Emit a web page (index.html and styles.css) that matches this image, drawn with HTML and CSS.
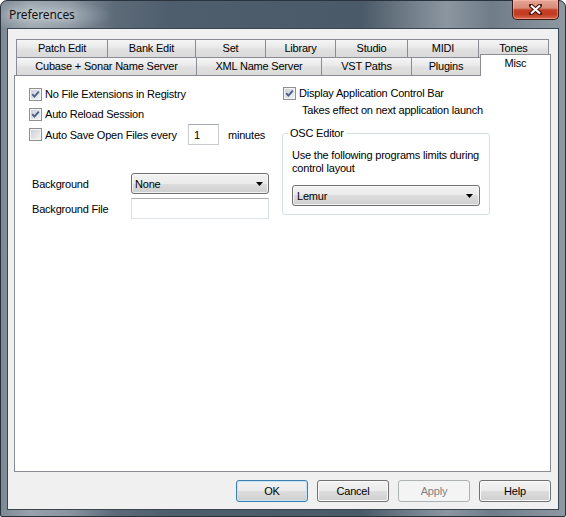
FILE: index.html
```html
<!DOCTYPE html>
<html lang="en">
<head>
    <meta charset="UTF-8">
    <title>Preferences</title>
    <link rel="stylesheet" href="styles.css">
</head>
<body>

<div class="window">
    <div class="titlebar">
        <span class="title">Preferences</span>
        <span class="close-btn">
            <svg width="13" height="11" viewBox="0 0 13 11">
                <path d="M2 1.5 L11 9.5 M11 1.5 L2 9.5" stroke="#4a1810" stroke-width="4.2" stroke-linecap="square"/>
                <path d="M2 1.5 L11 9.5 M11 1.5 L2 9.5" stroke="#fff" stroke-width="2"/>
            </svg>
        </span>
    </div>

    <div class="client">
        <div class="tabs">
            <div class="tab-row">
                <div class="tab w-patch">Patch Edit</div>
                <div class="tab w-bank">Bank Edit</div>
                <div class="tab w-set">Set</div>
                <div class="tab w-library">Library</div>
                <div class="tab w-studio">Studio</div>
                <div class="tab w-midi">MIDI</div>
                <div class="tab w-tones">Tones</div>
            </div>
            <div class="tab-row">
                <div class="tab w-cubase">Cubase + Sonar Name Server</div>
                <div class="tab w-xml">XML Name Server</div>
                <div class="tab w-vst">VST Paths</div>
                <div class="tab w-plugins">Plugins</div>
                <div class="tab tab-active w-misc">Misc</div>
            </div>
        </div>

        <div class="tab-page">
            <div class="col-left">
                <div class="check-row">
                    <span class="checkbox checked">
                        <svg width="11" height="11" viewBox="0 0 11 11"><path d="M2.2 5.2 L4.4 7.6 L8.8 2.6" fill="none" stroke="#4b5f8e" stroke-width="1.9"/></svg>
                    </span>
                    No File Extensions in Registry
                </div>
                <div class="check-row">
                    <span class="checkbox checked">
                        <svg width="11" height="11" viewBox="0 0 11 11"><path d="M2.2 5.2 L4.4 7.6 L8.8 2.6" fill="none" stroke="#4b5f8e" stroke-width="1.9"/></svg>
                    </span>
                    Auto Reload Session
                </div>
                <div class="check-row save-row">
                    <span class="checkbox"></span>
                    <span class="save-label">Auto Save Open Files every</span>
                    <span class="textbox minutes-box">1</span>
                    <span class="unit">minutes</span>
                </div>

                <div class="field-row bg-row">
                    <span class="field-label">Background</span>
                    <div class="combo bg-combo">
                        <span>None</span>
                        <svg width="7" height="4" viewBox="0 0 7 4"><path d="M0 0 H7 L3.5 4 Z" fill="#000"/></svg>
                    </div>
                </div>
                <div class="field-row file-row">
                    <span class="field-label">Background File</span>
                    <span class="textbox file-box"></span>
                </div>
            </div>

            <div class="col-right">
                <div class="check-row bar-row">
                    <span class="checkbox checked">
                        <svg width="11" height="11" viewBox="0 0 11 11"><path d="M2.2 5.2 L4.4 7.6 L8.8 2.6" fill="none" stroke="#4b5f8e" stroke-width="1.9"/></svg>
                    </span>
                    Display Application Control Bar
                </div>
                <div class="note">Takes effect on next application launch</div>

                <fieldset class="group">
                    <legend>OSC Editor</legend>
                    <p class="group-text">Use the following programs limits during<br>control layout</p>
                    <div class="combo osc-combo">
                        <span>Lemur</span>
                        <svg width="7" height="4" viewBox="0 0 7 4"><path d="M0 0 H7 L3.5 4 Z" fill="#000"/></svg>
                    </div>
                </fieldset>
            </div>
        </div>

        <div class="buttons">
            <button class="btn btn-default">OK</button>
            <button class="btn">Cancel</button>
            <button class="btn" disabled>Apply</button>
            <button class="btn">Help</button>
        </div>
    </div>
</div>

</body>
</html>
```

FILE: styles.css
```css
body {
    margin: 0;
    background: #fff;
    font-family: "Liberation Sans", Arial, sans-serif;
    font-size: 11px;
    letter-spacing: -0.2px;
    color: #000;
}

/* window frame */
.window {
    width: 566px;
    height: 517px;
    box-sizing: border-box;
    border: 1px solid #29333d;
    border-radius: 7px 7px 2px 2px;
    padding: 0 6px 6px;
    display: flex;
    flex-direction: column;
    background-color: #5a6876;
    background-image: linear-gradient(to right, #7c8893 0%, #98a2ab 5%, #8a959f 12%, #5d6b79 20%, #4f5e6c 30%, #4b5a68 64%, #6f7c88 72%, #8b96a0 79%, #707d89 87%, #7d8994 93%, #8e98a2 100%);
}

.titlebar {
    height: 27px;
    margin: 0 -6px;
    padding: 0 6px 0 8px;
    display: flex;
    justify-content: space-between;
    align-items: flex-start;
    background: radial-gradient(ellipse 70px 16px at 42px 14px, rgba(210, 218, 224, 0.55), rgba(210, 218, 224, 0));
}

.title {
    font-family: "Noto Sans", "Open Sans", sans-serif;
    font-size: 12px;
    letter-spacing: -0.1px;
    line-height: 28px;
    color: #111;
    text-shadow: 0 0 6px rgba(255, 255, 255, 0.6);
}

.close-btn {
    width: 47px;
    height: 20px;
    margin-top: -1px;
    box-sizing: border-box;
    border: 1px solid #3d1812;
    border-top: 0;
    border-radius: 0 0 5px 5px;
    display: flex;
    align-items: center;
    justify-content: center;
    background: linear-gradient(#e6a696 0%, #d98b78 42%, #c5402a 52%, #c23a22 75%, #d86a4e 100%);
    box-shadow: inset 0 0 0 1px rgba(255, 200, 185, 0.45);
}

/* client area */
.client {
    flex: 1;
    border: 1px solid #3a4552;
    background: #f0f0f0;
    padding: 10px 7px 0 6px;
    display: flex;
    flex-direction: column;
}

.tabs {
    padding-left: 2px;
}

.tab-row {
    display: flex;
    height: 18px;
}

.tab {
    box-sizing: border-box;
    height: 18px;
    border: 1px solid #898c95;
    border-bottom: 0;
    margin-right: -1px;
    text-align: center;
    line-height: 17px;
    white-space: nowrap;
    background: linear-gradient(#f5f5f5 0%, #e9e9e9 45%, #e0e0e0 55%, #dadada 100%);
}

.tab-active {
    height: 22px;
    margin-top: -3px;
    position: relative;
    z-index: 1;
    background: #fff;
}

.w-patch { width: 92px; }
.w-bank { width: 89px; }
.w-set { width: 71px; }
.w-library { width: 71px; }
.w-studio { width: 73px; }
.w-midi { width: 72px; }
.w-tones { width: 71px; }
.w-cubase { width: 181px; }
.w-xml { width: 126px; }
.w-vst { width: 91px; }
.w-plugins { width: 70px; }
.w-misc { width: 71px; }

.tab-page {
    height: 397px;
    box-sizing: border-box;
    border: 1px solid #898c95;
    background: #fff;
    display: flex;
    padding: 7px 0 0 14px;
}

/* left column */
.col-left {
    width: 253px;
    padding-top: 1px;
}

.check-row {
    display: flex;
    align-items: center;
    height: 20px;
    white-space: nowrap;
}

.checkbox {
    width: 13px;
    height: 13px;
    flex: none;
    box-sizing: border-box;
    margin-right: 3px;
    border: 1px solid #8e8f8f;
    background: linear-gradient(135deg, #c9cdd3, #f5f5f5);
    box-shadow: inset 0 0 0 1px #f4f4f4;
}

.checkbox svg {
    display: block;
}

.save-row {
    height: 21px;
}

.save-label {
    width: 143px;
}

.textbox {
    box-sizing: border-box;
    height: 21px;
    border: 1px solid #dde2e7;
    border-top-color: #abadb3;
    background: #fff;
    display: flex;
    align-items: center;
}

.minutes-box {
    width: 31px;
    padding-left: 5px;
    border-color: #c8ccd2;
    border-top-color: #a7abb2;
}

.unit {
    margin-left: 9px;
}

.field-row {
    display: flex;
    align-items: center;
}

.bg-row {
    margin-top: 28px;
}

.file-row {
    margin-top: 4px;
}

.field-label {
    width: 99px;
    padding-left: 3px;
}

.file-box {
    width: 138px;
}

.combo {
    box-sizing: border-box;
    height: 21px;
    border: 1px solid #707070;
    border-radius: 3px;
    padding: 0 5px 0 3px;
    display: flex;
    align-items: center;
    justify-content: space-between;
    background: linear-gradient(#f2f2f2 0%, #ebebeb 50%, #dddddd 50%, #cfcfcf 100%);
    box-shadow: inset 0 0 0 1px rgba(255, 255, 255, 0.7);
}

.bg-combo {
    width: 138px;
}

/* right column */
.col-right {
    width: 208px;
}

.bar-row {
    padding-left: 1px;
}

.note {
    height: 14px;
    line-height: 14px;
    padding-left: 20px;
    white-space: nowrap;
}

.group {
    margin: 10px 0 0;
    padding: 9px 8px 8px 9px;
    border: 1px solid #d5dfe5;
    border-radius: 3px;
    min-width: 0;
}

.group legend {
    padding: 0 2px;
    margin-left: -4px;
    line-height: 13px;
}

.group-text {
    margin: 0;
    line-height: 13px;
    white-space: nowrap;
}

.osc-combo {
    margin-top: 10px;
    width: 188px;
    padding-left: 4px;
    padding-right: 6px;
}

/* dialog buttons */
.buttons {
    margin-top: 8px;
    display: flex;
    justify-content: flex-end;
    gap: 9px;
}

.btn {
    width: 72px;
    height: 22px;
    box-sizing: border-box;
    padding: 0;
    border: 1px solid #707070;
    border-radius: 3px;
    font: inherit;
    letter-spacing: inherit;
    color: #000;
    background: linear-gradient(#f2f2f2 0%, #ebebeb 50%, #dddddd 50%, #cfcfcf 100%);
    box-shadow: inset 0 0 0 1px #fbfbfb;
}

.btn-default {
    border-color: #3c7fb1;
    box-shadow: inset 0 0 0 1px #c4e5f6;
}

.btn:disabled {
    border-color: #adb2b5;
    background: #f4f4f4;
    color: #838383;
    box-shadow: none;
}
```
